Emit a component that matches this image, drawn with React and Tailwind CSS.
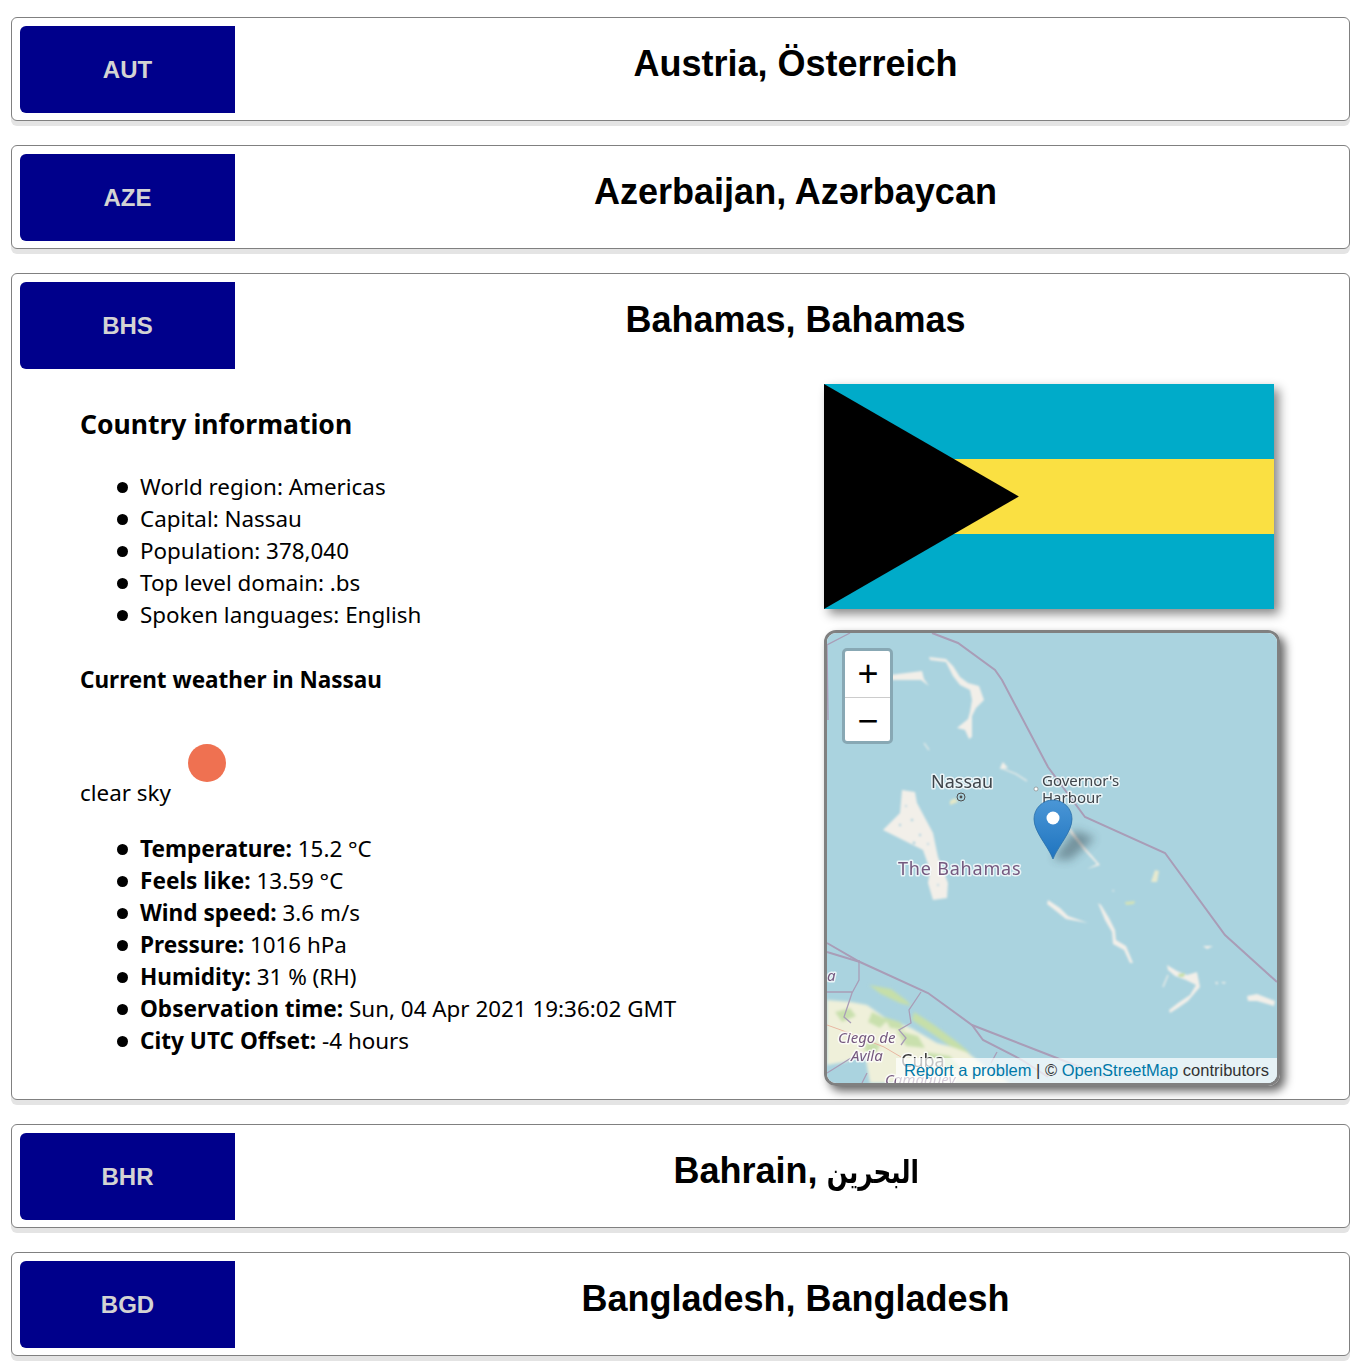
import React from 'react';

const SANS = 'font-["Liberation_Sans","DejaVu_Sans",sans-serif]';

function CardHeader({ code, title }) {
  return (
    <div className="flex items-start">
      <div className={`w-[215px] h-[87px] shrink-0 flex items-center justify-center rounded-l-[6px] bg-[#00008b] text-[#d3d3d3] text-[24px] font-bold ${SANS}`}>
        {code}
      </div>
      <h2 className={`flex-1 ml-[15px] mt-[17px] text-center text-black text-[36px] leading-[42px] font-bold ${SANS}`}>
        {title}
      </h2>
    </div>
  );
}

function Card({ code, title, children }) {
  return (
    <div className="mb-[24px] px-[8px] pt-[8px] pb-[7px] bg-white border border-[#808080] rounded-[6px] shadow-[0_5px_0_0_#e4e4e4]">
      <CardHeader code={code} title={title} />
      {children}
    </div>
  );
}

function Bullets({ items }) {
  return (
    <ul className="pl-[37px] text-[22.4px] leading-[32px]">
      {items.map((it, i) => (
        <li key={i} className="flex items-center whitespace-pre">
          <span className="w-[11px] h-[11px] mr-[12px] rounded-full bg-black shrink-0" />
          <span>
            {it.label ? <b className="text-[22.6px]">{it.label} </b> : null}
            {it.text}
          </span>
        </li>
      ))}
    </ul>
  );
}

function MapDrawing() {
  const land = '#f2efe9';
  const border = '#a99db7';
  return (
    <svg className="block w-[450px] h-[450px]" viewBox="827 633 450 450">
      <defs>
        <linearGradient id="pin" x1="0" y1="0" x2="0" y2="1">
          <stop offset="0" stopColor="#4a96d6" />
          <stop offset="1" stopColor="#1f74bf" />
        </linearGradient>
        <filter id="soft"><feGaussianBlur stdDeviation="0.55" /></filter>
        <filter id="soft1"><feGaussianBlur stdDeviation="0.8" /></filter>
        <filter id="soft2"><feGaussianBlur stdDeviation="1.4" /></filter>
        <filter id="shade" x="-50%" y="-50%" width="200%" height="200%"><feGaussianBlur stdDeviation="5" /></filter>
      </defs>
      <rect x="827" y="633" width="450" height="450" fill="#aad3df" />

      {/* Cuba */}
      <g filter="url(#soft2)">
        <path d="M827 1000 L851 1002 L867 1005 L884 1017 L911 1028 L937 1043 L964 1050 L990 1070 L1010 1083 L870 1083 L865 1055 L845 1062 L827 1065 Z" fill="#eff0da" />
        <path d="M835 1012 L850 1008 L856 1016 L842 1022 Z M872 1012 L888 1020 L880 1028 L868 1022 Z M896 1030 L918 1036 L925 1048 L906 1046 Z M925 1052 L950 1056 L962 1070 L935 1068 Z M868 1040 L880 1045 L875 1055 L864 1050 Z M884 1017 L900 1022 L905 1030 L890 1028 Z" fill="#c9e0ad" />
        <path d="M869 985 L891 989 L907 1001 L911 1006 L900 1003 L881 994 Z M914 1012 L934 1025 L957 1042 L971 1054 L950 1046 L930 1032 L912 1020 Z" fill="#c6dfa9" />
      </g>
      <g filter="url(#soft)">
        <path d="M827 1025 L841 1030 L884 1047 L901 1057" fill="none" stroke="#e8b7a2" strokeWidth="1" />
        <path d="M859 960 L859 980 L852 993 L844 1017 L851 1023 M827 992 L852 992 M921 992 L909 1010 L911 1023 L899 1030 L906 1038 L901 1045 M827 1073 L851 1058 M867 1073 L862 1083 M997 1052 L991 1063" fill="none" stroke={border} strokeWidth="1.3" />
      </g>

      {/* islands */}
      <g filter="url(#soft1)">
        <g fill={land}>
          <path d="M890 675 L922 671 L924 679 L929 686 L921 680 L890 680 Z" />
          <path d="M929 657 L946 659 L953 666 L960 677 L968 683 L979 686 L984 700 L976 708 L972 716 L972 737 L969 739 L965 730 L957 728 L968 719 L970 712 L972 700 L970 690 L960 685 L953 676 L946 662 L930 660 Z" />
          <path d="M902 790 L915 792 L917 803 L933 833 L938 857 L948 883 L947 898 L933 900 L928 883 L930 870 L923 850 L903 840 L883 830 L900 813 Z" />
          <path d="M1070 828 L1087 850 L1100 865 L1087 869 L1097 864 L1083 849 L1070 833 Z" />
          <path d="M1048 900 L1060 908 L1068 916 L1088 923 L1066 919 L1056 911 L1047 904 Z" />
          <path d="M1098 903 L1101 905 L1109 918 L1115 930 L1116 940 L1126 946 L1133 963 L1130 963 L1124 950 L1113 944 L1112 932 L1105 920 Z" />
          <path d="M1167 965 L1177 971 L1187 975 L1197 972 L1200 987 L1188 1001 L1178 1008 L1170 1013 L1169 1010 L1178 1003 L1190 995 L1196 985 L1186 980 L1175 976 L1168 970 Z" />
          <path d="M1247 996 L1257 994 L1275 1001 L1274 1006 L1257 1001 L1248 1001 Z" />
          <path d="M1203 946 L1213 946 L1207 949 Z M1215 982 L1218 982 L1217 985 Z M1221 982 L1226 982 L1224 984 Z M1112 890 L1114 890 L1114 892 Z" />
          <path d="M1155 870 L1159 871 L1157 882 L1151 882 Z" fill="#e6e9cf" />
          <path d="M1125 902 L1135 901 L1134 904 L1126 905 Z" fill="#d3e3b8" />
          <path d="M1178 974 L1185 973 L1184 977 L1179 977 Z" fill="#c6dfa9" />
          <path d="M950 801 L955 798 L958 802 L950 805 Z" fill="#e5e8c6" />
        </g>
        <g fill="#aad3df">
          <circle cx="906" cy="806" r="1" /><circle cx="912" cy="820" r="1.3" /><circle cx="900" cy="825" r="1.2" />
          <circle cx="920" cy="835" r="1.2" /><circle cx="914" cy="843" r="1.4" /><circle cx="928" cy="844" r="1" />
          <circle cx="938" cy="885" r="1" />
        </g>
        <path d="M1168 975 L1163 987 M924 743 L929 750 M1003 763 L1001 768 L1016 774 L1027 781" fill="none" stroke={land} strokeWidth="1.2" />
        <path d="M1003 762 L1008 768 L1000 769 Z" fill={land} />
      </g>

      <g filter="url(#soft)">
        {/* maritime borders */}
        <g fill="none" stroke={border} strokeWidth="2">
          <path d="M828 720 L827 645 L850 633" strokeWidth="1.4" />
          <path d="M932 633 L958 643 L995 670 L1002 680 L1048 767 L1085 817 L1165 853 L1225 935 L1277 982" />
          <path d="M827 943 L860 962 L928 993 L972 1025 L1062 1060 L1105 1077" />
          <path d="M827 952 L860 962" />
          <path d="M972 1025 L983 1040 L1022 1060 L1048 1077" />
        </g>

        {/* labels */}
        <g fontFamily="'Noto Sans',sans-serif" paintOrder="stroke" stroke="#ffffff" strokeOpacity="0.75" strokeWidth="3" strokeLinejoin="round">
          <text x="931" y="788" fontSize="18" fill="#3f454b">Nassau</text>
          <text x="1042" y="786" fontSize="15" fill="#3f454b">Governor's</text>
          <text x="1042" y="803" fontSize="15" fill="#3f454b">Harbour</text>
          <text x="898" y="875" fontSize="18" letterSpacing="0.8" fill="#75597f">The Bahamas</text>
          <text x="838" y="1043" fontSize="15" fontStyle="italic" fill="#75597f">Ciego de</text>
          <text x="851" y="1061" fontSize="15" fontStyle="italic" fill="#75597f">Avila</text>
          <text x="901" y="1067" fontSize="18" fill="#3a3a3a">Cuba</text>
          <text x="885" y="1085" fontSize="15" fontStyle="italic" fill="#75597f">Camagüey</text>
          <text x="827" y="981" fontSize="15" fontStyle="italic" fill="#75597f">a</text>
        </g>
        <circle cx="961" cy="797" r="4" fill="none" stroke="#4d4d4d" strokeWidth="1" />
        <circle cx="961" cy="797" r="1.4" fill="#4d4d4d" />
        <circle cx="1036" cy="789" r="2" fill="#ffffff" stroke="#888888" strokeWidth="0.7" />
      </g>

      {/* marker */}
      <path d="M1053 859 L1075 830 L1095 838 L1070 860 Z" fill="#23323a" opacity="0.4" filter="url(#shade)" />
      <path d="M1053 859 C1048 846 1034 832 1034 819 A19 19 0 0 1 1072 819 C1072 832 1058 846 1053 859 Z" fill="url(#pin)" stroke="#2a6ea8" strokeWidth="0.8" />
      <circle cx="1053" cy="818" r="6.5" fill="#ffffff" />
    </svg>
  );
}

function LeafletMap() {
  return (
    <div className="relative w-[456px] h-[456px] border-[3px] border-[#808080] rounded-[12px] overflow-hidden shadow-[5px_5px_10px_#666666]">
      <MapDrawing />
      {/* zoom control */}
      <div className="absolute left-[15px] top-[15px] border-[3px] border-[#88a8b4] rounded-[5px] bg-white w-[51px] text-black">
        <div className="h-[47px] pl-[1px] flex items-center justify-center border-b border-[#cccccc] text-[36px] font-['Liberation_Sans',sans-serif] leading-none">+</div>
        <div className="h-[43px] pl-[1px] pt-[2px] flex items-center justify-center text-[36px] font-['Liberation_Sans',sans-serif] leading-none">−</div>
      </div>
      {/* attribution */}
      <div className={`absolute right-0 bottom-0 h-[25px] px-[8px] bg-white/70 text-[16.5px] leading-[25px] text-[#333333] whitespace-nowrap ${SANS}`}>
        <span className="text-[#0078a8]">Report a problem</span> | © <span className="text-[#0078a8]">OpenStreetMap</span> contributors
      </div>
    </div>
  );
}

function BahamasDetails() {
  return (
    <div className="flex font-['Noto_Sans','Open_Sans',sans-serif] text-black text-[22.4px] leading-[32px]">
      <div className="flex-1 pl-[60px] pt-[37px]">
        <h3 className="text-[26.5px] leading-[36px] font-bold">Country information</h3>
        <div className="mt-[29px]">
          <Bullets items={[
            { text: 'World region: Americas' },
            { text: 'Capital: Nassau' },
            { text: 'Population: 378,040' },
            { text: 'Top level domain: .bs' },
            { text: 'Spoken languages: English' },
          ]} />
        </div>
        <h4 className="mt-[33px] text-[22.5px] leading-[32px] font-bold">Current weather in Nassau</h4>
        <div className="mt-[33px] flex items-end h-[80px]">
          <span className="leading-[32px]">clear sky</span>
          <svg className="w-[80px] h-[80px] shrink-0" viewBox="0 0 80 80">
            <circle cx="36" cy="34" r="19" fill="#ef7151" />
          </svg>
        </div>
        <div className="mt-[24px] mb-[35px]">
          <Bullets items={[
            { label: 'Temperature:', text: '15.2 °C' },
            { label: 'Feels like:', text: '13.59 °C' },
            { label: 'Wind speed:', text: '3.6 m/s' },
            { label: 'Pressure:', text: '1016 hPa' },
            { label: 'Humidity:', text: '31 % (RH)' },
            { label: 'Observation time:', text: 'Sun, 04 Apr 2021 19:36:02 GMT' },
            { label: 'City UTC Offset:', text: '-4 hours' },
          ]} />
        </div>
      </div>
      <div className="w-[517px] shrink-0 pt-[15px]">
        {/* flag */}
        <svg className="block w-[450px] h-[225px] shadow-[5px_5px_10px_#888888]" viewBox="0 0 6 3">
          <rect width="6" height="3" fill="#00abc9" />
          <rect y="1" width="6" height="1" fill="#fae042" />
          <path d="M0 0 L2.598 1.5 L0 3 Z" fill="#000000" />
        </svg>
        <div className="mt-[21px]">
          <LeafletMap />
        </div>
      </div>
    </div>
  );
}

export default function App() {
  return (
    <div className="bg-white pt-[17px] pl-[11px] pr-[9px] w-[1359px] h-[1366px] overflow-hidden">
      <Card code="AUT" title="Austria, Österreich" />
      <Card code="AZE" title="Azerbaijan, Azərbaycan" />
      <Card code="BHS" title="Bahamas, Bahamas">
        <BahamasDetails />
      </Card>
      <Card
        code="BHR"
        title={
          <>
            Bahrain,{' '}
            <span className="inline-block text-[32px] leading-[38px] scale-x-[0.77] -mx-[15px]">البحرين</span>
          </>
        }
      />
      <Card code="BGD" title="Bangladesh, Bangladesh" />
    </div>
  );
}
